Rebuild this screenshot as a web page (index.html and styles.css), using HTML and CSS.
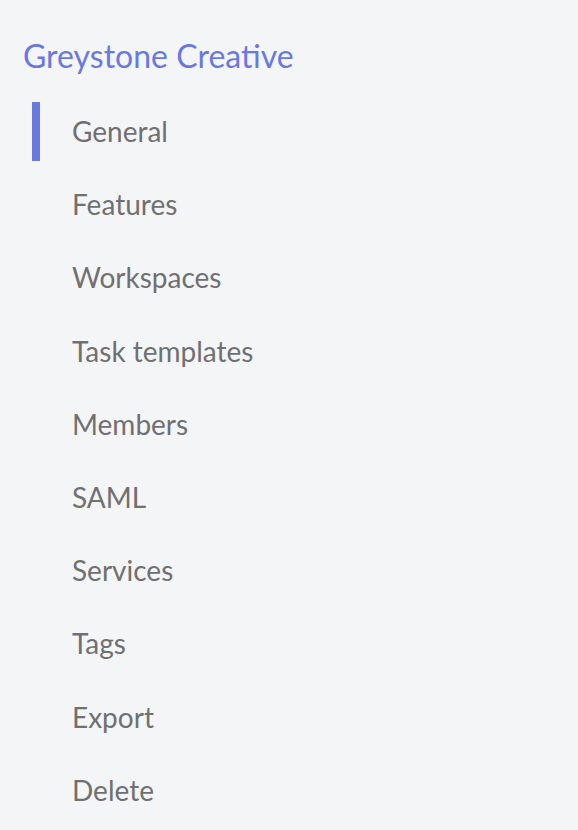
FILE: index.html
```html
<!DOCTYPE html>
<html>
<head>
    <title>Settings</title>
    <link rel="stylesheet" href="styles.css">
</head>
<body>

<!-- Settings sidebar -->
<div class="sidebar">
    <div class="org-name">Greystone Creative</div>

    <ul class="settings-nav">
        <li class="nav-item active">General</li>
        <li class="nav-item">Features</li>
        <li class="nav-item">Workspaces</li>
        <li class="nav-item">Task templates</li>
        <li class="nav-item">Members</li>
        <li class="nav-item">SAML</li>
        <li class="nav-item">Services</li>
        <li class="nav-item">Tags</li>
        <li class="nav-item">Export</li>
        <li class="nav-item">Delete</li>
    </ul>
</div>

</body>
</html>
```

FILE: styles.css
```css
body {
    margin: 0;
    background-color: #f4f5f7;
    font-family: Lato, "Open Sans", sans-serif;
}

.sidebar {
    padding: 36px 0 0 23px;
}

.org-name {
    font-size: 32px;
    line-height: 40px;
    color: #6a79e0;
}

.settings-nav {
    list-style: none;
    margin: 26px 0 0 9px;
    padding: 0;
    display: flex;
    flex-direction: column;
    gap: 14.2px;
}

.nav-item {
    font-size: 28px;
    line-height: 59px;
    color: #707070;
    padding-left: 32px;
    border-left: 8px solid transparent;
    cursor: pointer;
}

.nav-item.active {
    border-left-color: #6a79e0;
}
```
